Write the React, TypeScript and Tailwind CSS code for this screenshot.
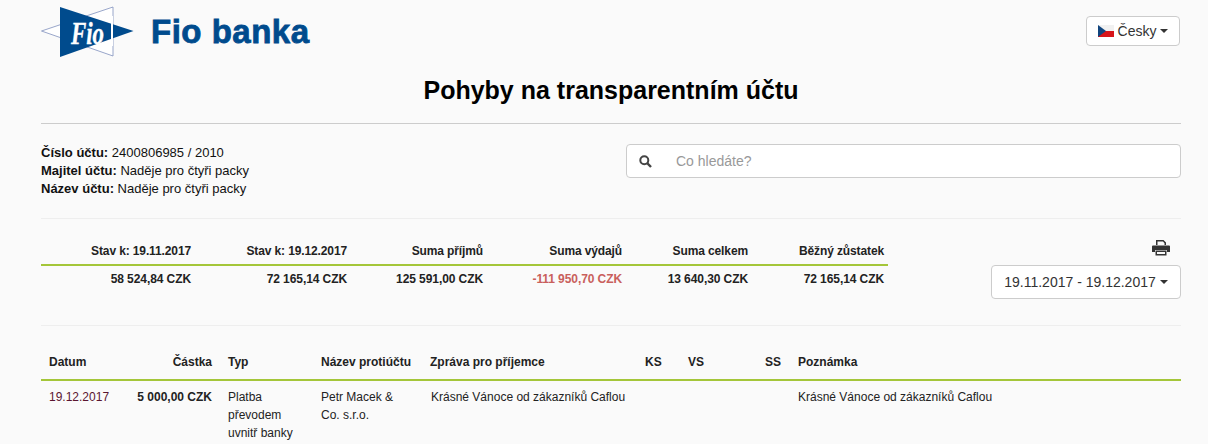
import React from "react";

const sumCols = [
  { w: "w-[154px]", h: "Stav k: 19.11.2017", v: "58 524,84 CZK" },
  { w: "w-[156px]", h: "Stav k: 19.12.2017", v: "72 165,14 CZK" },
  { w: "w-[136px]", h: "Suma příjmů", v: "125 591,00 CZK" },
  { w: "w-[139px]", h: "Suma výdajů", v: "-111 950,70 CZK", red: true },
  { w: "w-[126px]", h: "Suma celkem", v: "13 640,30 CZK" },
  { w: "w-[136px]", h: "Běžný zůstatek", v: "72 165,14 CZK" },
];

function Logo() {
  return (
    <svg width="94" height="52" viewBox="0 0 94 52" className="block">
      <polygon points="0.5,25 72,1 72,50" fill="#fff" stroke="#7f8fbd" strokeWidth="0.8" />
      <polygon points="19,1 92.5,25 19,51" fill="#004b8d" />
      <path d="M71 10 V40" stroke="#fff" strokeWidth="2" />
      <text transform="translate(30 38) scale(0.88 1.25)" fontFamily="'Liberation Serif', serif" fontStyle="italic" fontWeight="700" fontSize="26" fill="#fff" stroke="#fff" strokeWidth="0.3">Fio</text>
    </svg>
  );
}

export default function App() {
  return (
    <div className="h-[444px] overflow-hidden bg-[#fafafa] pl-[41px] pr-[27px] text-[12px] leading-[18px] text-[#000] font-['Liberation_Sans',Arial,sans-serif]">
      <header className="flex h-[61px] items-start justify-between">
        <div className="mt-[6px] flex items-center gap-[16px]">
          <Logo />
          <span className="text-[33px] font-bold leading-[52px] tracking-[0.5px] text-[#004b8d] [-webkit-text-stroke:0.8px_#004b8d]">Fio banka</span>
        </div>
        <button className="mr-px mt-[16px] flex h-[30px] w-[94px] items-center justify-center gap-[4px] rounded-[4px] border border-[#ccc] bg-white text-[14px] text-[#333]">
          <svg width="16" height="12" viewBox="0 0 16 12">
            <rect width="16" height="6" fill="#f1f1f1" />
            <rect y="6" width="16" height="6" fill="#d7141a" />
            <polygon points="0,0 8,6 0,12" fill="#11457e" />
          </svg>
          <span>Česky</span>
          <span className="h-0 w-0 border-x-[4px] border-t-[4px] border-x-transparent border-t-[#333]" />
        </button>
      </header>

      <h1 className="h-[62px] pt-[14px] text-center text-[25px] font-bold leading-[30px] text-[#000]">Pohyby na transparentním účtu</h1>
      <div className="border-t border-[#ccc]" />

      <section className="flex h-[95px] items-start justify-between border-b border-[#eee] pt-[20px]">
        <div className="text-[13px] leading-[18px] text-[#111]">
          <div><b>Číslo účtu:</b> 2400806985 / 2010</div>
          <div><b>Majitel účtu:</b> Naděje pro čtyři packy</div>
          <div><b>Název účtu:</b> Naděje pro čtyři packy</div>
        </div>
        <div className="flex h-[34px] w-[555px] items-center rounded-[4px] border border-[#ccc] bg-white">
          <svg width="13" height="13" viewBox="0 0 13 13" className="ml-[12px]" fill="none" stroke="#444" strokeWidth="2">
            <circle cx="5.3" cy="5.3" r="4" />
            <path d="M8.2 8.2 L12 12" strokeWidth="2.4" />
          </svg>
          <span className="ml-[24px] text-[14px] text-[#999]">Co hledáte?</span>
        </div>
      </section>

      <section className="flex h-[107px] items-start justify-between border-b border-[#eee]">
        <div className="mt-[22px] flex w-[847px]">
          {sumCols.map((c) => (
            <div key={c.h} className={c.w}>
              <div className="h-[25px] border-b-2 border-[#a4c639] pr-[4px] pt-px text-right font-bold leading-[18px] tracking-[-0.12px] text-[#222]">{c.h}</div>
              <div className={"pr-[4px] pt-[4px] text-right font-bold tracking-[-0.08px] " + (c.red ? "text-[#c9605c]" : "text-[#222]")}>{c.v}</div>
            </div>
          ))}
        </div>
        <div className="mt-[20px] flex w-[190px] flex-col items-end">
          <svg width="18" height="17" viewBox="0 0 18 17" className="mb-[9px] mr-[11px]">
            <path d="M4 1h7.5L14 3.5V6H4z M5.5 2.5V6h7V4.2L11 2.5z" fill="#333" fillRule="evenodd" />
            <path d="M1 6.5h16a1 1 0 0 1 1 1V13h-3v-2H3v2H0V7.5a1 1 0 0 1 1-1z" fill="#333" />
            <path d="M3.5 11.5h11V16.5h-11z M5 13v2h8v-2z" fill="#333" fillRule="evenodd" />
          </svg>
          <button className="flex h-[34px] w-[190px] items-center justify-center gap-[4px] rounded-[4px] border border-[#ccc] bg-white text-[14px] text-[#333]">
            <span>19.11.2017 - 19.12.2017</span>
            <span className="h-0 w-0 border-x-[4px] border-t-[4px] border-x-transparent border-t-[#333]" />
          </button>
        </div>
      </section>

      <section>
        <div className="flex h-[55px] items-end border-b-2 border-[#a4c639] pb-[8px] font-bold text-[#222]">
          <div className="flex w-[179px] justify-between px-[8px]"><span>Datum</span><span>Částka</span></div>
          <div className="w-[93px] pl-[8px]">Typ</div>
          <div className="w-[110px] pl-[8px]">Název protiúčtu</div>
          <div className="w-[215px] pl-[7px]">Zpráva pro příjemce</div>
          <div className="w-[42px] pl-[7px]">KS</div>
          <div className="w-[78px] pl-[8px]">VS</div>
          <div className="w-[33px] pl-[7px]">SS</div>
          <div className="pl-[7px]">Poznámka</div>
        </div>
        <div className="flex pt-[7px] text-[12px] text-[#222]">
          <div className="flex w-[179px] justify-between px-[8px]"><span className="text-[#5a1530]">19.12.2017</span><b>5 000,00 CZK</b></div>
          <div className="w-[93px] pl-[8px]">Platba<br />převodem<br />uvnitř banky</div>
          <div className="w-[110px] pl-[8px]">Petr Macek &amp;<br />Co. s.r.o.</div>
          <div className="w-[367px] pl-[8px]">Krásné Vánoce od zákazníků Caflou</div>
          <div className="pl-[8px]">Krásné Vánoce od zákazníků Caflou</div>
        </div>
      </section>
    </div>
  );
}
